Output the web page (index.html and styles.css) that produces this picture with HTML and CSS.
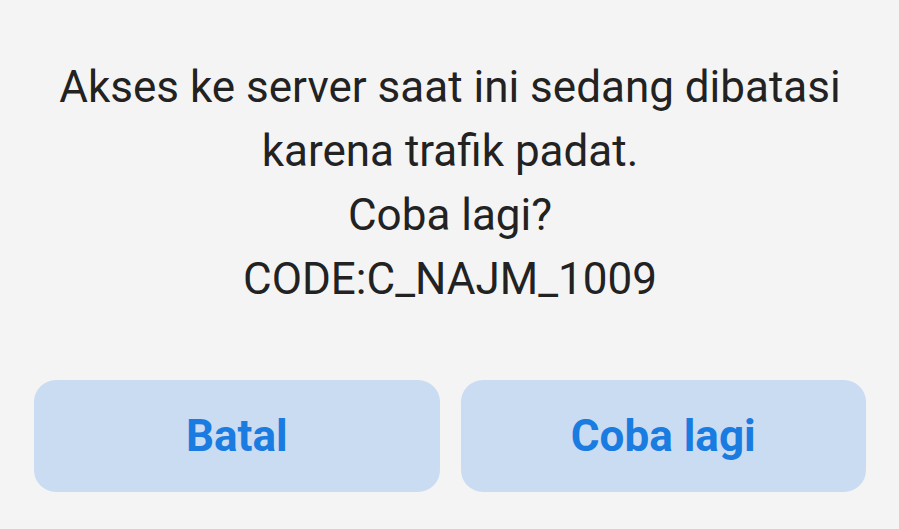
FILE: index.html
```html
<!DOCTYPE html>
<html>
<head>
  <meta charset="UTF-8">
  <title>Coba lagi</title>
  <link rel="stylesheet" href="styles.css">
</head>
<body>
<div class="dialog">
  <div class="message">
    <p>Akses ke server saat ini sedang dibatasi</p>
    <p>karena trafik padat.</p>
    <p>Coba lagi?</p>
    <p>CODE:C_NAJM_1009</p>
  </div>
  <div class="actions">
    <a href="javascript:;" class="btn">Batal</a>
    <a href="javascript:;" class="btn">Coba lagi</a>
  </div>
</div>
</body>
</html>
```
FILE: styles.css
```css
* {
  margin: 0;
  padding: 0;
}
html, body {
  height: 100%;
}
body {
  background: #f4f4f4;
  font-family: Roboto, "Liberation Sans", sans-serif;
  color: #222;
}
.dialog {
  padding: 55px 33px 0 34px;
}
.message {
  text-align: center;
  font-size: 44px;
  line-height: 64px;
}
.actions {
  display: flex;
  gap: 21px;
  margin-top: 69px;
}
.btn {
  flex: 1;
  height: 112px;
  line-height: 112px;
  border-radius: 22px;
  background: #c9dcf2;
  color: #1a7be0;
  font-size: 44px;
  font-weight: bold;
  text-align: center;
  text-decoration: none;
}
```
